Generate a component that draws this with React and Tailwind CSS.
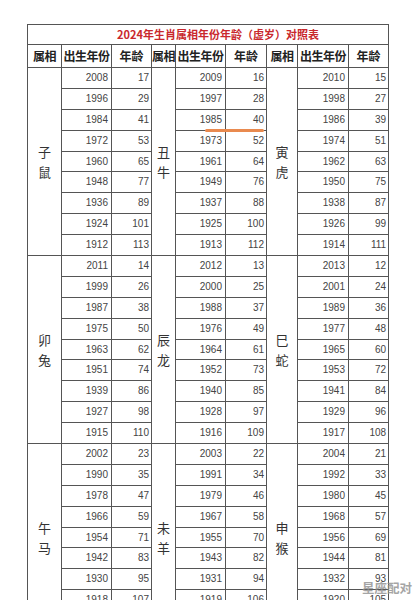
import React from 'react';

const groups = [
  {
    names: ['子鼠', '丑牛', '寅虎'],
    start: [2008, 2009, 2010],
  },
  {
    names: ['卯兔', '辰龙', '巳蛇'],
    start: [2011, 2012, 2013],
  },
  {
    names: ['午马', '未羊', '申猴'],
    start: [2002, 2003, 2004],
  },
];

const cell = 'border border-[#555]';
const numCell = 'border border-[#555] text-right text-[10px] text-[#444] leading-none';

const App = () => {
  return (
    <div className="relative w-[416px] min-h-[600px] bg-white" style={{ fontFamily: '"Noto Sans CJK SC", sans-serif' }}>
      <div className="pl-[27px] pt-[24px]">
        <table className="w-[361px] table-fixed border-collapse">
          <colgroup>
            <col className="w-[34px]" />
            <col className="w-[50px]" />
            <col className="w-[40px]" />
            <col className="w-[24px]" />
            <col className="w-[50px]" />
            <col className="w-[41px]" />
            <col className="w-[31px]" />
            <col className="w-[51px]" />
            <col className="w-[40px]" />
          </colgroup>
          <tbody>
            <tr className="h-[20px]">
              <td colSpan={9} className={`${cell} pl-[20px] text-center text-[11px] font-bold leading-none text-[#c9282d]`}>
                2024年生肖属相年份年龄（虚岁）对照表
              </td>
            </tr>
            <tr className="h-[23px]">
              {[0, 1, 2].map((i) => (
                <React.Fragment key={i}>
                  <td className={`${cell} text-center text-[12px] font-bold leading-none text-[#222] tracking-[-0.5px]`}>属相</td>
                  <td className={`${cell} text-center text-[12px] font-bold leading-none text-[#222] tracking-[-0.5px]`}>出生年份</td>
                  <td className={`${cell} text-center text-[12px] font-bold leading-none text-[#222]`}>年龄</td>
                </React.Fragment>
              ))}
            </tr>
            {groups.map((g, gi) =>
              Array.from({ length: 9 }).map((_, r) => (
                <tr key={`${gi}-${r}`} className="h-[20.9px]">
                  {g.start.map((s, ci) => {
                    const year = s - r * 12;
                    const age = 2025 - year;
                    return (
                      <React.Fragment key={ci}>
                        {r === 0 && (
                          <td rowSpan={9} className={`${cell} text-center align-middle text-[13px] leading-[20px] text-[#333]`}>
                            {g.names[ci][0]}
                            <br />
                            {g.names[ci][1]}
                          </td>
                        )}
                        <td className={`${numCell} pr-[3px]`} style={{ fontFamily: '"Liberation Sans", sans-serif' }}>
                          {year}
                        </td>
                        <td className={`${numCell} pr-[2px]`} style={{ fontFamily: '"Liberation Sans", sans-serif' }}>
                          {age}
                        </td>
                      </React.Fragment>
                    );
                  })}
                </tr>
              ))
            )}
          </tbody>
        </table>
      </div>

      {/* orange underline mark */}
      <div className="absolute left-[205px] top-[129px] h-[3px] w-[59px] rounded-full bg-[#e98a4f]" />

      {/* watermark */}
      <div className="absolute left-[362px] top-[582px] text-[12.5px] font-bold leading-none text-[#8f8f8f] opacity-80">
        星座配对
      </div>
    </div>
  );
};

export default App;
